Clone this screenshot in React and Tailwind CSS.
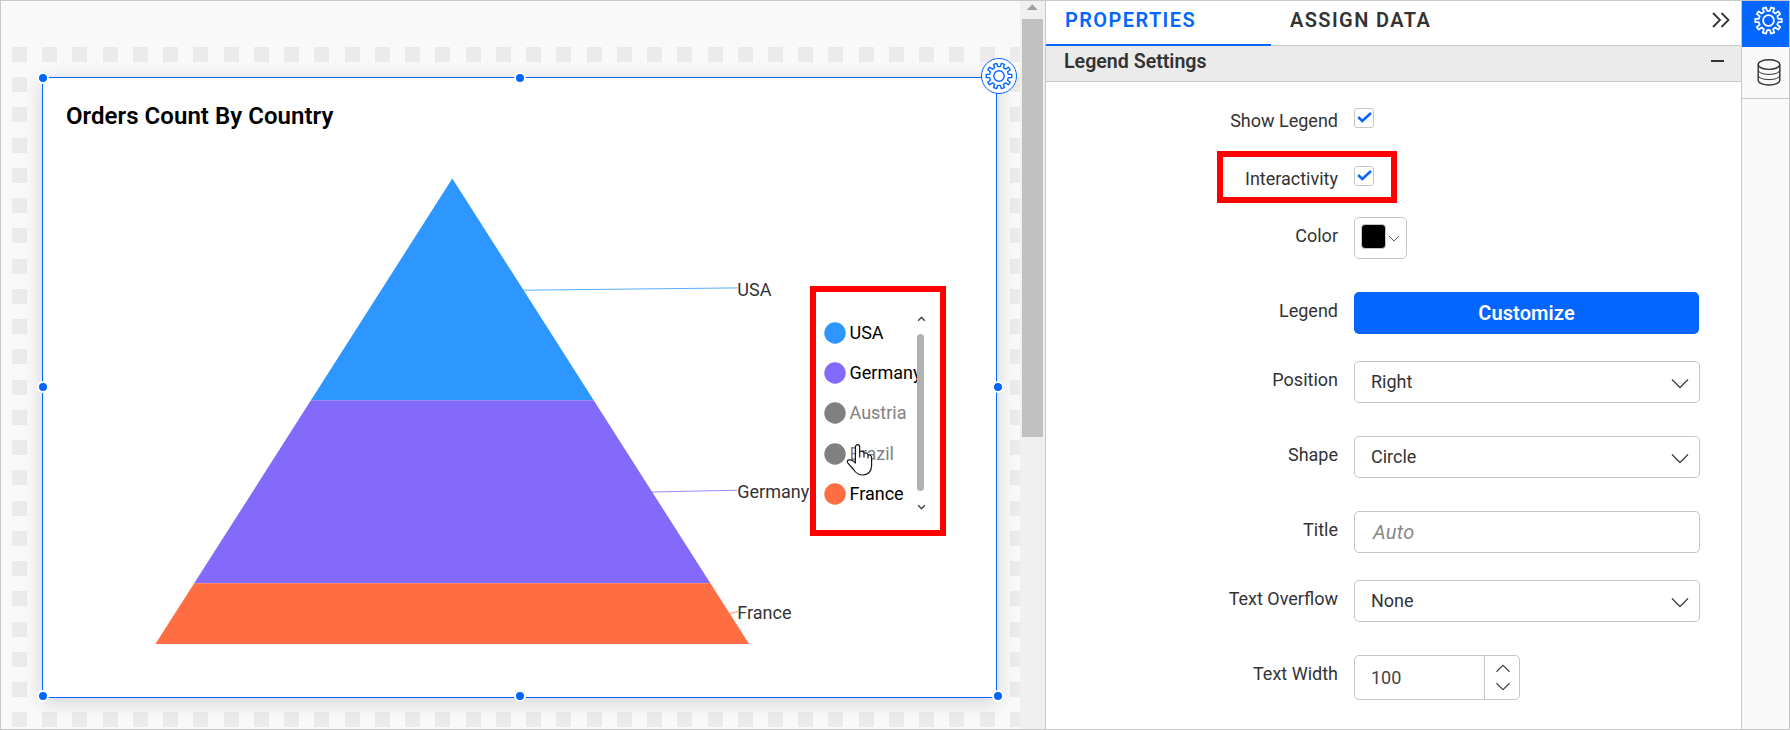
import React from "react";

const PERIOD = 30.24;

function gearPath(c, ro, ri, teeth) {
  const step = (Math.PI * 2) / teeth;
  const pt = (r, a) => `${(c + r * Math.sin(a)).toFixed(2)} ${(c - r * Math.cos(a)).toFixed(2)}`;
  const parts = [];
  for (let i = 0; i < teeth; i++) {
    const a = (i + 0.5) * step;
    parts.push(pt(ri, a - step * 0.27), pt(ro, a - step * 0.2), pt(ro, a + step * 0.2), pt(ri, a + step * 0.27));
  }
  return `M${parts.join("L")}Z`;
}

const GEAR = gearPath(14, 12.9, 9.5, 10);

function Gear({ className, stroke }) {
  return (
    <svg viewBox="0 0 28 28" className={className} fill="none" stroke="currentColor" strokeWidth={stroke} strokeLinejoin="round">
      <path d={GEAR} />
      <circle cx="14" cy="14" r="5.2" />
    </svg>
  );
}

function Backdrop() {
  const tiles = [];
  for (let r = 0; r < 23; r++) {
    for (let c = 0; c < 34; c++) {
      if (r === 0 || r === 22 || c === 0 || c === 33) {
        tiles.push(<rect key={`${r}-${c}`} x={11 + Math.round(c * PERIOD)} y={46 + Math.round(r * PERIOD)} width="15" height="15" />);
      }
    }
  }
  return (
    <svg className="absolute inset-0 h-full w-full" fill="#ebebeb" shapeRendering="crispEdges">
      {tiles}
    </svg>
  );
}

function Handle({ className }) {
  return <span className={`absolute size-3 rounded-full border-2 border-white bg-[#0565ff] ${className}`} />;
}

const LEGEND = [
  ["USA", "#2e97ff", false],
  ["Germany", "#836afa", false],
  ["Austria", "#808080", true],
  ["Brazil", "#808080", true],
  ["France", "#ff6e42", false],
];

function Chart() {
  return (
    <svg className="absolute inset-0 h-full w-full" viewBox="43 78 953 619" fontSize="18" fill="#333">
      <path d="M452.3 178.5L593.7 400.3H310.9Z" fill="#2e97ff" />
      <path d="M310.9 400.3H593.7L710.4 583.3H194.2Z" fill="#836afa" />
      <path d="M194.2 583.3H710.4L749.1 644H155.4Z" fill="#ff6e42" />
      <path d="M523.5 290.2L737.5 287.9" stroke="#2e97ff" strokeWidth="0.8" />
      <path d="M652 492L737.5 490.2" stroke="#836afa" strokeWidth="0.8" />
      <path d="M730 613.5L738 611.5" stroke="#ff6e42" strokeWidth="0.8" />
      <text x="737.3" y="296">USA</text>
      <text x="737.3" y="497.7">Germany</text>
      <text x="737.3" y="618.5">France</text>
    </svg>
  );
}

function Legend() {
  return (
    <div className="absolute left-[767px] top-[208px] h-[250px] w-[136px] border-[6px] border-[#ff0000] bg-white">
      <ul className="flex flex-col pl-[7.5px] pt-[20.5px]">
        {LEGEND.map(([name, color, off]) => (
          <li key={name} className="flex h-[40.4px] shrink-0 items-center gap-[4px]">
            <svg className="h-[22px] w-[22px] shrink-0" viewBox="0 0 22 22">
              <circle cx="11" cy="11" r="10.7" fill={color} />
            </svg>
            <span className={off ? "text-[18px] leading-5 text-[#808080]" : "text-[18px] leading-5 text-black"}>{name}</span>
          </li>
        ))}
      </ul>
      <span className="absolute left-[101px] top-[42px] h-[157px] w-[7px] rounded-full bg-[#b2b2b2]" />
      <svg className="absolute left-[101px] top-[23px] h-[8px] w-[9px]" viewBox="0 0 9 8" fill="none" stroke="#444" strokeWidth="1.5">
        <path d="M1.2 5.7L4.5 2.3L7.8 5.7" />
      </svg>
      <svg className="absolute left-[101px] top-[211px] h-[8px] w-[9px]" viewBox="0 0 9 8" fill="none" stroke="#444" strokeWidth="1.5">
        <path d="M1.2 2.3L4.5 5.7L7.8 2.3" />
      </svg>
      <svg className="absolute left-[30px] top-[151px] h-[34px] w-[28px]" viewBox="0 0 28 34" fill="#fff" stroke="#111827" strokeWidth="1.2" strokeLinejoin="round" strokeLinecap="round">
        <path d="M9.4 20V4.2C9.4 2.6 10.3 1.7 11.5 1.7S13.7 2.6 13.7 4.2V14V9.8C13.7 8.7 14.6 8 15.6 8.2C17 8.4 18 9 18 10.6V14V11.2C18 10 19.3 9.5 20.5 10C21.6 10.5 22 11.4 22 12.6V15V13C22 11.8 23.2 11.4 24.4 12.2C25.4 12.9 25.6 14 25.6 15.5V22.5C25.6 28.5 22 32 16.5 32C11.5 32 9.5 29.5 7.5 26.5L2 20.2C1 19 1.1 17.8 2.2 17.1C3.5 16.4 7 16.8 9.4 20" />
      </svg>
    </div>
  );
}

function Widget() {
  return (
    <div className="absolute left-[41px] top-[76px] h-[621px] w-[955px] border border-[#0565ff] bg-white shadow-[0_4px_18px_rgba(50,60,80,0.2)]">
      <Chart />
      <h1 className="relative pl-[23px] pt-[24px] text-[24px] font-semibold leading-7 tracking-[0.04px] text-black">Orders Count By Country</h1>
      <Legend />
      <Handle className="-left-[6px] -top-[6px]" />
      <Handle className="left-[471px] -top-[6px]" />
      <Handle className="-left-[6px] top-[303px]" />
      <Handle className="-right-[8px] top-[303px]" />
      <Handle className="-bottom-[5px] -left-[6px]" />
      <Handle className="-bottom-[5px] left-[471px]" />
      <Handle className="-bottom-[5px] -right-[8px]" />
      <span className="absolute -right-[21px] -top-[20px] flex size-9 items-center justify-center rounded-full border border-[#0565ff] bg-white text-[#0565ff]">
        <Gear className="size-[28px]" stroke="1.4" />
      </span>
    </div>
  );
}

function Chevron({ className, up }) {
  return (
    <svg viewBox="0 0 18 11" className={className} fill="none" stroke="#444" strokeWidth="1.4">
      <path d={up ? "M1 9.5L9 1.5L17 9.5" : "M1 1.5L9 9.5L17 1.5"} />
    </svg>
  );
}

function Checkbox() {
  return (
    <span className="flex size-5 items-center justify-center rounded-[3px] border border-[#c6c6c6]">
      <svg viewBox="0 0 16 14" className="h-[14px] w-4" fill="none" stroke="#0565ff" strokeWidth="2.5">
        <path d="M2.2 6L6.3 10L15 2" />
      </svg>
    </span>
  );
}

function Field({ label, className, labelClass, children }) {
  return (
    <div className={`flex items-start ${className || ""}`}>
      <span className={`w-[292px] shrink-0 text-right text-[18px] leading-5 text-[#333] ${labelClass || "pt-[9px]"}`}>{label}</span>
      <div className="ml-4">{children}</div>
    </div>
  );
}

function Select({ value }) {
  return (
    <div className="flex h-[42px] w-[346px] items-center justify-between rounded-[5px] border border-[#c6c6c6] pl-4 pr-[10px] text-[18px] text-[#333]">
      <span className="pb-px">{value}</span>
      <Chevron className="mt-[2px] h-[11px] w-[18px]" />
    </div>
  );
}

export default function App() {
  return (
    <div className="flex h-[730px] w-[1790px] overflow-hidden border border-[#c8c8c8] bg-white font-['Roboto',sans-serif]">
      <main className="relative w-[1019px] shrink-0 overflow-hidden bg-[#f9f9f9]">
        <Backdrop />
        <Widget />
      </main>

      <div className="flex w-[25px] shrink-0 flex-col bg-[#f0f0f0] pl-[2px]">
        <svg viewBox="0 0 21 18" className="h-[18px] w-[21px]" fill="#a0a0a0">
          <path d="M4.8 9L10.3 3.2L15.8 9Z" />
        </svg>
        <span className="h-[418px] w-[21px] bg-[#c1c1c1]" />
      </div>

      <section className="flex w-[697px] shrink-0 flex-col border-x border-[#c8c8c8] bg-white">
        <nav className="flex h-[45px] shrink-0 border-b border-[#c8c8c8] text-[20px] font-semibold leading-6 tracking-[1.4px]">
          <span className="h-[45px] w-[225px] shrink-0 border-b-2 border-[#0565ff] pl-[19px] pt-[7px] text-[#0565ff]">PROPERTIES</span>
          <span className="pl-[19px] pt-[7px] text-[#333]">ASSIGN DATA</span>
          <svg viewBox="0 0 18 16" className="ml-auto mr-[11px] mt-[11px] h-4 w-[18px]" fill="none" stroke="#333" strokeWidth="1.8">
            <path d="M1 1L8 8L1 15M9.5 1L16.5 8L9.5 15" />
          </svg>
        </nav>
        <header className="flex h-[36px] shrink-0 items-start justify-between border-b border-[#c8c8c8] bg-[#ebebeb] pl-[18px] pr-[17px] pt-[4px]">
          <h2 className="text-[19.6px] font-semibold leading-6 text-[#333]">Legend Settings</h2>
          <span className="mt-[10px] h-[2px] w-[13px] bg-[#333]" />
        </header>

        <div className="relative flex flex-col pt-[26px]">
          <Field label="Show Legend" className="h-5" labelClass="pt-[3px]"><Checkbox /></Field>
          <Field label="Interactivity" className="mt-[38px] h-5" labelClass="pt-[3px]"><Checkbox /></Field>
          <Field label="Color" className="mt-[31px]">
            <div className="flex h-[42px] w-[53px] items-start rounded-[5px] border border-[#c6c6c6] pl-[6px] pt-[6px]">
              <span className="size-[25px] rounded-[4px] border border-[#c6c6c6] bg-black" />
              <Chevron className="ml-[2px] mt-[11px] h-[7px] w-[12px]" />
            </div>
          </Field>
          <Field label="Legend" className="mt-[33px]">
            <button className="block h-[42px] w-[345px] rounded-[5px] bg-[#0565ff] text-[20px] font-semibold tracking-[0.1px] text-white">Customize</button>
          </Field>
          <Field label="Position" className="mt-[27px]"><Select value="Right" /></Field>
          <Field label="Shape" className="mt-[33px]"><Select value="Circle" /></Field>
          <Field label="Title" className="mt-[33px]">
            <div className="flex h-[42px] w-[346px] items-center rounded-[5px] border border-[#c6c6c6] pb-px pl-[18px] text-[20px] italic tracking-[0.3px] text-[#888]">Auto</div>
          </Field>
          <Field label="Text Overflow" className="mt-[27px]"><Select value="None" /></Field>
          <Field label="Text Width" className="mt-[33px]">
            <div className="flex h-[45px] w-[166px] rounded-[5px] border border-[#c6c6c6] text-[18px] text-[#444]">
              <span className="flex w-[130px] items-center border-r border-[#c6c6c6] pl-4">100</span>
              <span className="flex flex-1 flex-col items-center justify-between py-2 pl-[2px]">
                <Chevron up className="h-[9px] w-[16px]" />
                <Chevron className="h-[9px] w-[16px]" />
              </span>
            </div>
          </Field>
          <span className="absolute left-[171px] top-[69px] h-[52px] w-[180px] border-[6px] border-[#ff0000]" />
        </div>
      </section>

      <aside className="flex min-w-0 flex-1 flex-col bg-[#f9f9f9]">
        <div className="flex h-[46px] items-start justify-center bg-[#0565ff] pl-[5px] pt-[5px] text-white">
          <Gear className="size-[29px]" stroke="1.7" />
        </div>
        <div className="flex h-[52px] justify-center border-b border-[#c8c8c8] pl-[6px] pt-[12px]">
          <svg viewBox="0 0 24 27" className="h-[27px] w-6" fill="none" stroke="#333" strokeWidth="1.4">
            <ellipse cx="12" cy="5.6" rx="10.8" ry="4.8" />
            <path d="M1.2 5.6V21.2C1.2 23.8 6 26 12 26S22.8 23.8 22.8 21.2V5.6" />
            <path d="M1.2 11C1.2 13.6 6 15.4 12 15.4S22.8 13.6 22.8 11M1.2 16.2C1.2 18.8 6 20.6 12 20.6S22.8 18.8 22.8 16.2" strokeWidth="1" />
          </svg>
        </div>
      </aside>
    </div>
  );
}
